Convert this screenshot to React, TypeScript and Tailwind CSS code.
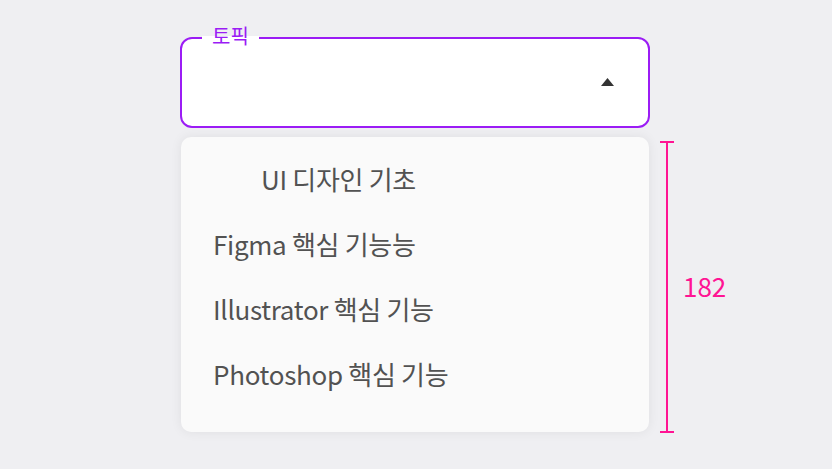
import React from 'react';

const topics = [
  { label: 'UI 디자인 기초', indent: true },
  { label: 'Figma 핵심 기능능', indent: false },
  { label: 'Illustrator 핵심 기능', indent: false },
  { label: 'Photoshop 핵심 기능', indent: false },
];

const App = () => {
  return (
    <div
      className="w-full h-[469px] bg-[#efeff2] pl-[180px] pt-[37px]"
      style={{ fontFamily: '"Noto Sans CJK KR", "Noto Sans", sans-serif' }}
    >
      {/* Select field */}
      <div className="relative w-[470px] h-[91px] rounded-[12px] border-2 border-[#9b1cf5] bg-white flex items-center justify-end pr-[34px]">
        <span className="absolute left-[20px] -top-[13px] px-[10px] bg-[linear-gradient(to_bottom,#efeff2_50%,#ffffff_50%)] text-[20px] leading-[20px] text-[#9b1cf5]">
          토픽
        </span>
        <svg width="13" height="8" viewBox="0 0 13 8" className="mb-[1px]">
          <polygon points="6.5,0 13,8 0,8" fill="#333333" />
        </svg>
      </div>

      {/* Menu + measurement */}
      <div className="flex mt-[9px]">
        <ul className="ml-[1px] w-[468px] h-[295px] rounded-[10px] bg-[#fafafa] shadow-[0_0_12px_rgba(0,0,0,0.07)] pt-[9px]">
          {topics.map((t) => (
            <li
              key={t.label}
              className={`h-[65px] flex items-center text-[26px] text-[#525252] tracking-[-0.3px] ${t.indent ? 'pl-[80px]' : 'pl-[32px]'}`}
            >
              {t.label}
            </li>
          ))}
        </ul>

        <div className="ml-[11px] mt-[4px] h-[292px] w-[14px] flex flex-col items-center">
          <div className="w-[14px] h-[2px] bg-[#ff1493]" />
          <div className="flex-1 w-[2px] bg-[#ff1493]" />
          <div className="w-[14px] h-[2px] bg-[#ff1493]" />
        </div>
        <span className="ml-[9px] self-center text-[26px] text-[#ff1493]">182</span>
      </div>
    </div>
  );
};

export default App;
